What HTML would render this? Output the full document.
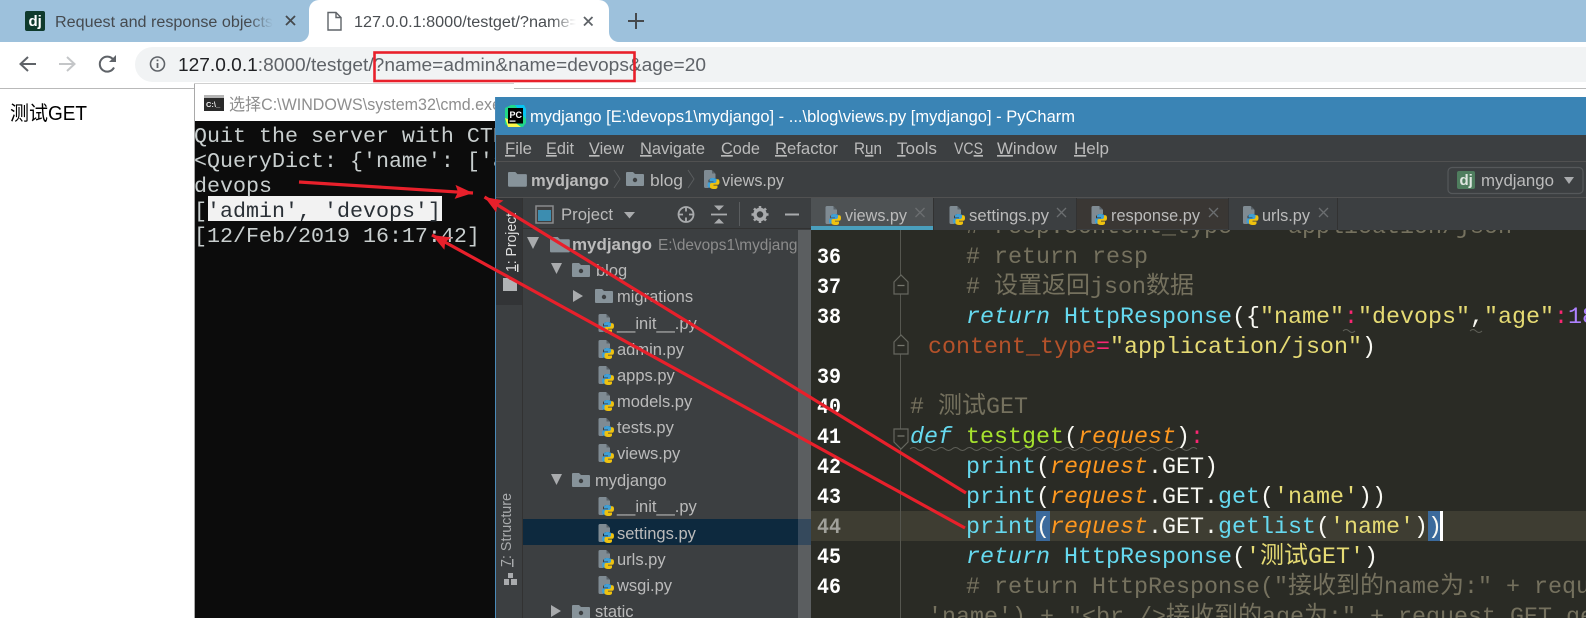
<!DOCTYPE html>
<html><head><meta charset="utf-8"><style>
html,body{margin:0;padding:0;background:#fff;width:1586px;height:618px;overflow:hidden}
svg{display:block;font-family:"Liberation Sans","Noto Sans CJK SC",sans-serif}
text{white-space:pre}
.m{font-family:"Liberation Sans","Noto Sans CJK SC",sans-serif;font-size:16.5px;fill:#bbbbbb}
.t{font-size:16.5px;fill:#bbbbbb}
.u{text-decoration:underline}
.code{font-family:"Liberation Mono","Noto Sans CJK SC",monospace;font-size:23.33px;fill:#f8f8f2}
.cm{fill:#75715e}.kw{fill:#66d9ef;font-style:italic}.fn{fill:#66d9ef}.st{fill:#e6db74}.pk{fill:#f92672}
.pa{fill:#fd971f;font-style:italic}.gr{fill:#a6e22e}.kr{fill:#b5522a}
.z{font-size:24px}
.ln{font-family:"Liberation Mono",monospace;font-size:22px;fill:#fff;font-weight:bold}
.cmd{font-family:"Liberation Mono",monospace;font-size:21.67px;fill:#c9cfcf}
</style></head><body>
<svg width="1586" height="618" viewBox="0 0 1586 618" xmlns="http://www.w3.org/2000/svg">
<defs>
<linearGradient id="f1" x1="0" x2="1"><stop offset="0" stop-color="#9dc1dc" stop-opacity="0"/><stop offset="1" stop-color="#9dc1dc"/></linearGradient>
<linearGradient id="f2" x1="0" x2="1"><stop offset="0" stop-color="#fff" stop-opacity="0"/><stop offset="1" stop-color="#fff"/></linearGradient>
<clipPath id="cC"><rect x="194" y="121" width="301" height="497"/></clipPath>
<clipPath id="cT"><rect x="195" y="84" width="300" height="37"/></clipPath>
<clipPath id="cE"><rect x="811" y="230" width="775" height="388"/></clipPath>
<clipPath id="cP"><rect x="523" y="230" width="275" height="388"/></clipPath>
<clipPath id="cA"><rect x="340" y="0" width="236" height="42"/></clipPath>
<g id="py">
<path d="M3 0h6l4 4v4H8.500L6 10v8H3a1.500 1.500 0 0 1-1.500-1.500V1.500A1.500 1.500 0 0 1 3 0z" fill="#7f8b93"/>
<path d="M9.500 0v3.500H13z" fill="#596268"/>
<path id="sn" d="M10 8c-2.200 0-3 .8-3 2v1.500h4v.8H6.500C5.500 12.300 5 13.500 5 15c0 1.800.7 2.700 1.700 2.700H8v-2c0-1 1-1.700 2-1.700h3c1 0 1.500-.7 1.500-1.500V10c0-1-1-2-4.500-2z" fill="#3f9fd6"/>
<path d="M10 8c-2.200 0-3 .8-3 2v1.500h4v.8H6.500C5.500 12.300 5 13.500 5 15c0 1.800.7 2.700 1.700 2.700H8v-2c0-1 1-1.700 2-1.700h3c1 0 1.500-.7 1.500-1.500V10c0-1-1-2-4.500-2z" fill="#efc20f" transform="rotate(180 11 13.500)"/>
</g>
<g id="fo"><path d="M0 1a1 1 0 0 1 1-1h6l2 2h8a1 1 0 0 1 1 1v10a1 1 0 0 1-1 1H1a1 1 0 0 1-1-1z" fill="#87939a"/></g>
<g id="fp"><use href="#fo"/><circle cx="9" cy="8" r="2.200" fill="#3c3f41"/></g>
<marker id="ah" markerUnits="userSpaceOnUse" markerWidth="20" markerHeight="16" refX="18" refY="7" orient="auto"><path d="M0 0L18 7L0 14L3 7z" fill="#e8202b"/></marker>
</defs>

<!-- browser -->
<rect width="1586" height="42" fill="#9dc1dc"/>
<rect x="25" y="11" width="20" height="20" rx="2" fill="#0f3a2c"/>
<text x="28.500" y="26" font-size="15" font-weight="bold" fill="#fff">dj</text>
<text x="55" y="27" font-size="15.500" fill="#454a4f" textLength="218" lengthAdjust="spacingAndGlyphs">Request and response objects</text>
<rect x="248" y="6" width="25" height="30" fill="url(#f1)"/>
<path d="M286 16l9 9M295 16l-9 9" stroke="#45494d" stroke-width="1.800" fill="none"/>
<path d="M299 42a10 10 0 0 0 10-10V10a10 10 0 0 1 10-10h280a10 10 0 0 1 10 10v22a10 10 0 0 0 10 10z" fill="#fff"/>
<path d="M328 12.500h8l5 5v12.500h-13z M336 12.500v5h5" fill="none" stroke="#5f6368" stroke-width="1.400"/>
<g clip-path="url(#cA)"><text x="354" y="27" font-size="15.500" fill="#4a4e52" textLength="225" lengthAdjust="spacingAndGlyphs">127.0.0.1:8000/testget/?name=</text></g>
<rect x="552" y="6" width="24" height="30" fill="url(#f2)"/>
<path d="M584 17l8.500 8.500M592.500 17l-8.500 8.500" stroke="#5f6368" stroke-width="1.800" fill="none"/>
<path d="M636 13v16M628 21h16" stroke="#45494d" stroke-width="2" fill="none"/>
<rect y="42" width="1586" height="46" fill="#fff"/>
<rect y="88" width="1586" height="1" fill="#b9b9b9"/>
<rect x="135" y="47" width="1480" height="35" rx="17.500" fill="#f1f3f4"/>
<path d="M36 64H21M28 57l-7.500 7 7.500 7" fill="none" stroke="#5f6368" stroke-width="2"/>
<path d="M59 64h15M67 57l7.500 7-7.500 7" fill="none" stroke="#c4c6c8" stroke-width="2"/>
<path d="M114 67.500a7.500 7.500 0 1 1-.8-8" fill="none" stroke="#5f6368" stroke-width="2"/>
<path d="M116 55v7h-7z" fill="#5f6368"/>
<circle cx="157.500" cy="64" r="7" fill="none" stroke="#5f6368" stroke-width="1.600"/>
<path d="M157.500 63v5M157.500 59.500v1.800" stroke="#5f6368" stroke-width="1.800"/>
<text x="178" y="71" font-size="18.500" fill="#5f6368" textLength="528" lengthAdjust="spacingAndGlyphs"><tspan fill="#202124">127.0.0.1</tspan>:8000/testget/?name=admin&amp;name=devops&amp;age=20</text>
<text x="10" y="120" font-size="20" fill="#000" textLength="77" lengthAdjust="spacingAndGlyphs">测试GET</text>

<!-- cmd -->
<rect x="194" y="83" width="320" height="535" fill="#fff"/>
<rect x="194" y="83" width="1" height="535" fill="#a9a9a9"/>
<rect x="194" y="83" width="320" height="1" fill="#d0d0d0"/>
<rect x="204" y="95" width="20" height="16" fill="#2a2a2a"/>
<rect x="204" y="95" width="20" height="3" fill="#b5b5b5"/>
<text x="206" y="107" font-size="7.500" font-weight="bold" fill="#eee">C:\_</text>
<g clip-path="url(#cT)"><text x="229" y="110" font-size="16.500" fill="#8e8e8e" textLength="272" lengthAdjust="spacingAndGlyphs">选择C:\WINDOWS\system32\cmd.exe</text></g>
<rect x="195" y="121" width="300" height="497" fill="#0c0c0c"/>
<rect x="208" y="196" width="234" height="25" fill="#f2f2f2"/>
<g clip-path="url(#cC)">
<text class="cmd" x="194" y="142">Quit the server with CTRL-BREAK.</text>
<text class="cmd" x="194" y="167">&lt;QueryDict: {'name': ['admin', 'devops']}&gt;</text>
<text class="cmd" x="194" y="192">devops</text>
<text class="cmd" x="194" y="217">[<tspan fill="#2a3036">'admin', 'devops']</tspan></text>
<text class="cmd" x="194" y="242">[12/Feb/2019 16:17:42]</text>
</g>

<!-- pycharm frame -->
<rect x="495" y="97" width="1091" height="521" fill="#3c3f41"/>
<rect x="495" y="97" width="1" height="521" fill="#4a8ab8"/>
<rect x="496" y="97" width="1090" height="38" fill="#3a84b5"/>
<g>
<path d="M505 108l6-3h13l2 4v14l-3 4h-14l-4-3z" fill="#21d789"/>
<path d="M515 105h9l2 4v10z" fill="#07c3f2"/>
<path d="M505 118l3 9h13l-8-6z" fill="#fcf84a"/>
<rect x="508" y="108" width="15" height="15.500" fill="#000"/>
<text x="509.500" y="118" font-size="9" font-weight="bold" fill="#fff">PC</text>
<rect x="509.500" y="120.500" width="6" height="1.200" fill="#fff"/>
</g>
<text x="530" y="122" font-size="16.500" fill="#fff" textLength="545" lengthAdjust="spacingAndGlyphs">mydjango [E:\devops1\mydjango] - ...\blog\views.py [mydjango] - PyCharm</text>

<!-- menu -->
<g class="m">
<text class="m" x="505" y="154" textLength="27" lengthAdjust="spacingAndGlyphs"><tspan class="u">F</tspan>ile</text>
<text class="m" x="546" y="154" textLength="28" lengthAdjust="spacingAndGlyphs"><tspan class="u">E</tspan>dit</text>
<text class="m" x="589" y="154" textLength="35" lengthAdjust="spacingAndGlyphs"><tspan class="u">V</tspan>iew</text>
<text class="m" x="640" y="154" textLength="65" lengthAdjust="spacingAndGlyphs"><tspan class="u">N</tspan>avigate</text>
<text class="m" x="721" y="154" textLength="39" lengthAdjust="spacingAndGlyphs"><tspan class="u">C</tspan>ode</text>
<text class="m" x="775" y="154" textLength="63" lengthAdjust="spacingAndGlyphs"><tspan class="u">R</tspan>efactor</text>
<text class="m" x="854" y="154" textLength="28" lengthAdjust="spacingAndGlyphs">R<tspan class="u">u</tspan>n</text>
<text class="m" x="897" y="154" textLength="40" lengthAdjust="spacingAndGlyphs"><tspan class="u">T</tspan>ools</text>
<text class="m" x="954" y="154" textLength="29" lengthAdjust="spacingAndGlyphs">VC<tspan class="u">S</tspan></text>
<text class="m" x="997" y="154" textLength="60" lengthAdjust="spacingAndGlyphs"><tspan class="u">W</tspan>indow</text>
<text class="m" x="1074" y="154" textLength="35" lengthAdjust="spacingAndGlyphs"><tspan class="u">H</tspan>elp</text>
</g>
<rect x="496" y="161" width="1090" height="1" fill="#515151"/>

<!-- nav bar -->
<use href="#fo" transform="translate(508 172) scale(1.050)"/>
<text x="531" y="186" font-size="16.500" font-weight="bold" fill="#bbb" textLength="78" lengthAdjust="spacingAndGlyphs">mydjango</text>
<path d="M614 170l6 9-6 9" fill="none" stroke="#5a5d5f" stroke-width="1"/>
<use href="#fp" transform="translate(626 172)"/>
<text x="650" y="186" class="t" textLength="33" lengthAdjust="spacingAndGlyphs">blog</text>
<path d="M688 170l6 9-6 9" fill="none" stroke="#5a5d5f" stroke-width="1"/>
<use href="#py" transform="translate(702.500 170)"/>
<text x="722" y="186" class="t" textLength="62" lengthAdjust="spacingAndGlyphs">views.py</text>
<rect x="1448" y="167.500" width="135" height="26" rx="4" fill="#3c3f41" stroke="#55585a" stroke-width="1.200"/>
<rect x="1457" y="171" width="18" height="18" rx="2" fill="#4f7d5e"/>
<text x="1459.500" y="185" font-size="15" font-weight="bold" fill="#dfe6e0">dj</text>
<text x="1481" y="186" class="t" textLength="73" lengthAdjust="spacingAndGlyphs">mydjango</text>
<path d="M1564 177h10l-5 7z" fill="#a9abad"/>
<rect x="496" y="197" width="1090" height="1" fill="#515151"/>

<!-- left strip -->
<rect x="496" y="198" width="26" height="420" fill="#3c3f41"/>
<rect x="496" y="198" width="26" height="107" fill="#323436"/>
<rect x="522" y="198" width="1" height="420" fill="#323232"/>
<text transform="translate(516 272) rotate(-90)" font-size="14.500" fill="#ddd" textLength="59" lengthAdjust="spacingAndGlyphs"><tspan class="u">1</tspan>: Project</text>
<path d="M503 278h5l2 2h7v11h-14z" fill="#b0b3b5"/>
<text transform="translate(511 567) rotate(-90)" font-size="14.500" fill="#a9abad" textLength="74" lengthAdjust="spacingAndGlyphs"><tspan class="u">7</tspan>: Structure</text>
<path d="M508 573h5v5h-5zM504 579h5v6h-5zM511 579h6v6h-6z" fill="#a9abad"/>

<!-- project header -->
<rect x="536" y="206" width="17" height="17" fill="#3f3f3f" stroke="#8a8c8e" stroke-width="1.500"/>
<rect x="538" y="210" width="13" height="11" fill="#3c8db0"/>
<text x="561" y="220" class="t" textLength="52" lengthAdjust="spacingAndGlyphs">Project</text>
<path d="M624 212h11l-5.500 6.500z" fill="#a9abad"/>
<circle cx="686" cy="214.500" r="7.500" fill="none" stroke="#a9abad" stroke-width="1.800"/>
<path d="M686 206.500v5M686 217.500v5M678 214.500h5M689 214.500h5" stroke="#a9abad" stroke-width="1.800"/>
<path d="M711 214.500h16" stroke="#a9abad" stroke-width="1.800"/>
<path d="M714 205.500l5 5 5-5zM714 223.500l5-5 5 5z" fill="#a9abad"/>
<rect x="739" y="202" width="1" height="24" fill="#5a5d5f"/>
<circle cx="760" cy="214.500" r="5" fill="none" stroke="#a9abad" stroke-width="3.500"/>
<path d="M760 206v3M760 220v3M751.500 214.500h3M765.500 214.500h3M754 208.500l2 2M764 218.500l2 2M766 208.500l-2 2M756 218.500l-2 2" stroke="#a9abad" stroke-width="2.500"/>
<path d="M785 214.500h14" stroke="#a9abad" stroke-width="2"/>
<rect x="523" y="228" width="288" height="1" fill="#323232"/>

<!-- tree -->
<rect x="798" y="230" width="13" height="388" fill="#5b5e60"/>
<rect x="523" y="519" width="275" height="26" fill="#0d293e"/>
<rect x="798" y="519" width="13" height="26" fill="#35495c"/>
<path d="M527 237h12l-6 12z" fill="#a9abad"/>
<use href="#fo" transform="translate(550 237) scale(1.100)"/>
<g clip-path="url(#cP)">
<text x="572" y="250" font-size="16.500" font-weight="bold" fill="#bbb" textLength="80" lengthAdjust="spacingAndGlyphs">mydjango</text>
<text x="658" y="250" font-size="16" fill="#8c8c8c" textLength="148" lengthAdjust="spacingAndGlyphs">E:\devops1\mydjango</text>
</g>
<path d="M551 263h11l-5.500 11z" fill="#a9abad"/>
<use href="#fp" transform="translate(572 263)"/>
<text x="596" y="276" class="t">blog</text>
<path d="M573 290l10 6-10 6z" fill="#a9abad"/>
<use href="#fp" transform="translate(595 289)"/>
<text x="617" y="302" class="t">migrations</text>
<use href="#py" transform="translate(597 314)"/><text x="617" y="329" class="t">__init__.py</text>
<use href="#py" transform="translate(597 340)"/><text x="617" y="355" class="t">admin.py</text>
<use href="#py" transform="translate(597 366)"/><text x="617" y="381" class="t">apps.py</text>
<use href="#py" transform="translate(597 392)"/><text x="617" y="407" class="t">models.py</text>
<use href="#py" transform="translate(597 418)"/><text x="617" y="433" class="t">tests.py</text>
<use href="#py" transform="translate(597 444)"/><text x="617" y="459" class="t">views.py</text>
<path d="M551 474h11l-5.500 11z" fill="#a9abad"/>
<use href="#fp" transform="translate(572 473)"/>
<text x="595" y="486" class="t">mydjango</text>
<use href="#py" transform="translate(597 497)"/><text x="617" y="512" class="t">__init__.py</text>
<use href="#py" transform="translate(597 524)"/><text x="617" y="539" class="t">settings.py</text>
<use href="#py" transform="translate(597 550)"/><text x="617" y="565" class="t">urls.py</text>
<use href="#py" transform="translate(597 576)"/><text x="617" y="591" class="t">wsgi.py</text>
<path d="M551 605l10 6-10 6z" fill="#a9abad"/>
<use href="#fp" transform="translate(572 605)"/>
<text x="595" y="617" class="t">static</text>

<!-- editor tabs -->
<rect x="811" y="198" width="775" height="32" fill="#3c3f41"/>
<rect x="811" y="198" width="122" height="28" fill="#4e5254"/>
<rect x="811" y="226" width="122" height="4" fill="#4a9fbd"/>
<rect x="933" y="198" width="1" height="32" fill="#323232"/>
<rect x="1077" y="199" width="151" height="30" fill="#3a3734"/>
<rect x="1228" y="198" width="1" height="32" fill="#323232"/>
<rect x="1337" y="198" width="1" height="32" fill="#323232"/>
<rect x="1076" y="198" width="1" height="32" fill="#323232"/>
<use href="#py" transform="translate(824 206)"/><text x="845" y="221" class="t" textLength="62" lengthAdjust="spacingAndGlyphs">views.py</text>
<path d="M915.500 208l9 9M924.500 208l-9 9" stroke="#6b6e70" stroke-width="1.300"/>
<use href="#py" transform="translate(948 206)"/><text x="969" y="221" class="t" textLength="80" lengthAdjust="spacingAndGlyphs">settings.py</text>
<path d="M1057 208l9 9M1066 208l-9 9" stroke="#6b6e70" stroke-width="1.300"/>
<use href="#py" transform="translate(1090 206)"/><text x="1111" y="221" class="t" textLength="89" lengthAdjust="spacingAndGlyphs">response.py</text>
<path d="M1209 208l9 9M1218 208l-9 9" stroke="#6b6e70" stroke-width="1.300"/>
<use href="#py" transform="translate(1241.500 206)"/><text x="1262" y="221" class="t" textLength="48" lengthAdjust="spacingAndGlyphs">urls.py</text>
<path d="M1319 208l9 9M1328 208l-9 9" stroke="#6b6e70" stroke-width="1.300"/>

<!-- editor -->
<rect x="811" y="230" width="775" height="388" fill="#2a2b25"/>
<rect x="811" y="511" width="775" height="30" fill="#3e3d32"/>
<rect x="900" y="230" width="1" height="388" fill="#55564f"/>
<g fill="#2a2b25" stroke="#66675f" stroke-width="1.200">
<path d="M894 282l7-7 7 7v12h-14z"/><path d="M894 342l7-7 7 7v12h-14z"/><path d="M894 429h14v13l-7 7-7-7z"/>
</g>
<path d="M897.500 285.500h7M897.500 345.500h7M897.500 436h7" stroke="#77786f" stroke-width="1.200"/>
<rect x="1036" y="511" width="14" height="30" fill="#3b6a9c"/>
<rect x="1428" y="511" width="12" height="30" fill="#3b6a9c"/>
<rect x="1440" y="511" width="3" height="30" fill="#fff"/>
<path d="M910 449q3.500-3 7 0t7 0 7 0 7 0 7 0 7 0 7 0 7 0 7 0 7 0 7 0 7 0 7 0 7 0 7 0 7 0 7 0 7 0 7 0 7 0 7 0 7 0 7 0 7 0 7 0 7 0 7 0 7 0 7 0 7 0 7 0 7 0 7 0 7 0 7 0 7 0 7 0 7 0 7 0 7 0 7 0" fill="none" stroke="#5f6058" stroke-width="1"/>
<path d="M1343 331q3-3 6 0t6 0M1470 331q3-3 6 0t6 0" fill="none" stroke="#5f6058" stroke-width="1"/>
<g clip-path="url(#cE)">
<text class="ln" x="817" y="263" textLength="24" lengthAdjust="spacingAndGlyphs">36</text>
<text class="ln" x="817" y="293" textLength="24" lengthAdjust="spacingAndGlyphs">37</text>
<text class="ln" x="817" y="323" textLength="24" lengthAdjust="spacingAndGlyphs">38</text>
<text class="ln" x="817" y="383" textLength="24" lengthAdjust="spacingAndGlyphs">39</text>
<text class="ln" x="817" y="413" textLength="24" lengthAdjust="spacingAndGlyphs">40</text>
<text class="ln" x="817" y="443" textLength="24" lengthAdjust="spacingAndGlyphs">41</text>
<text class="ln" x="817" y="473" textLength="24" lengthAdjust="spacingAndGlyphs">42</text>
<text class="ln" x="817" y="503" textLength="24" lengthAdjust="spacingAndGlyphs">43</text>
<text class="ln" x="817" y="533" textLength="24" lengthAdjust="spacingAndGlyphs" style="fill:#a0a09a">44</text>
<text class="ln" x="817" y="563" textLength="24" lengthAdjust="spacingAndGlyphs">45</text>
<text class="ln" x="817" y="593" textLength="24" lengthAdjust="spacingAndGlyphs">46</text>
<text class="code cm" x="966" y="233"># resp.content_type = "application/json"</text>
<text class="code cm" x="966" y="263"># return resp</text>
<text class="code cm" x="966" y="293"># <tspan class="z">设置返回</tspan>json<tspan class="z">数据</tspan></text>
<text class="code" x="966" y="323"><tspan class="kw">return</tspan> <tspan class="fn">HttpResponse</tspan>({<tspan class="st">"name"</tspan><tspan class="pk">:</tspan><tspan class="st">"devops"</tspan>,<tspan class="st">"age"</tspan><tspan class="pk">:</tspan><tspan style="fill:#ae81ff">18</tspan>,</text>
<text class="code" x="928" y="353"><tspan class="kr">content_type</tspan><tspan class="pk">=</tspan><tspan class="st">"application/json"</tspan>)</text>
<text class="code cm" x="910" y="413"># <tspan class="z">测试</tspan>GET</text>
<text class="code" x="910" y="443"><tspan class="kw">def</tspan> <tspan class="gr">testget</tspan>(<tspan class="pa">request</tspan>)<tspan class="pk">:</tspan></text>
<text class="code" x="966" y="473"><tspan class="fn">print</tspan>(<tspan class="pa">request</tspan>.GET)</text>
<text class="code" x="966" y="503"><tspan class="fn">print</tspan>(<tspan class="pa">request</tspan>.GET.<tspan class="fn">get</tspan>(<tspan class="st">'name'</tspan>))</text>
<text class="code" x="966" y="533"><tspan class="fn">print</tspan>(<tspan class="pa">request</tspan>.GET.<tspan class="fn">getlist</tspan>(<tspan class="st">'name'</tspan>))</text>
<text class="code" x="966" y="563"><tspan class="kw">return</tspan> <tspan class="fn">HttpResponse</tspan>(<tspan class="st">'<tspan class="z">测试</tspan>GET'</tspan>)</text>
<text class="code cm" x="966" y="593"># return HttpResponse("<tspan class="z">接收到的</tspan>name<tspan class="z">为</tspan>:" + request.GET.get(</text>
<text class="code cm" x="928" y="623">'name') + "&lt;br /&gt;<tspan class="z">接收到的</tspan>age<tspan class="z">为</tspan>:" + request.GET.get('age'))</text>
</g>

<!-- annotations -->
<rect x="374.500" y="52.500" width="260" height="28.500" fill="none" stroke="#e8202b" stroke-width="2.600"/>
<g stroke="#e8202b" stroke-width="3.200" fill="none">
<line x1="299" y1="182" x2="473" y2="193" marker-end="url(#ah)"/>
<line x1="966" y1="493" x2="484.500" y2="197" marker-end="url(#ah)"/>
<line x1="965" y1="528" x2="432" y2="235" marker-end="url(#ah)"/>
</g>
</svg>
</body></html>
